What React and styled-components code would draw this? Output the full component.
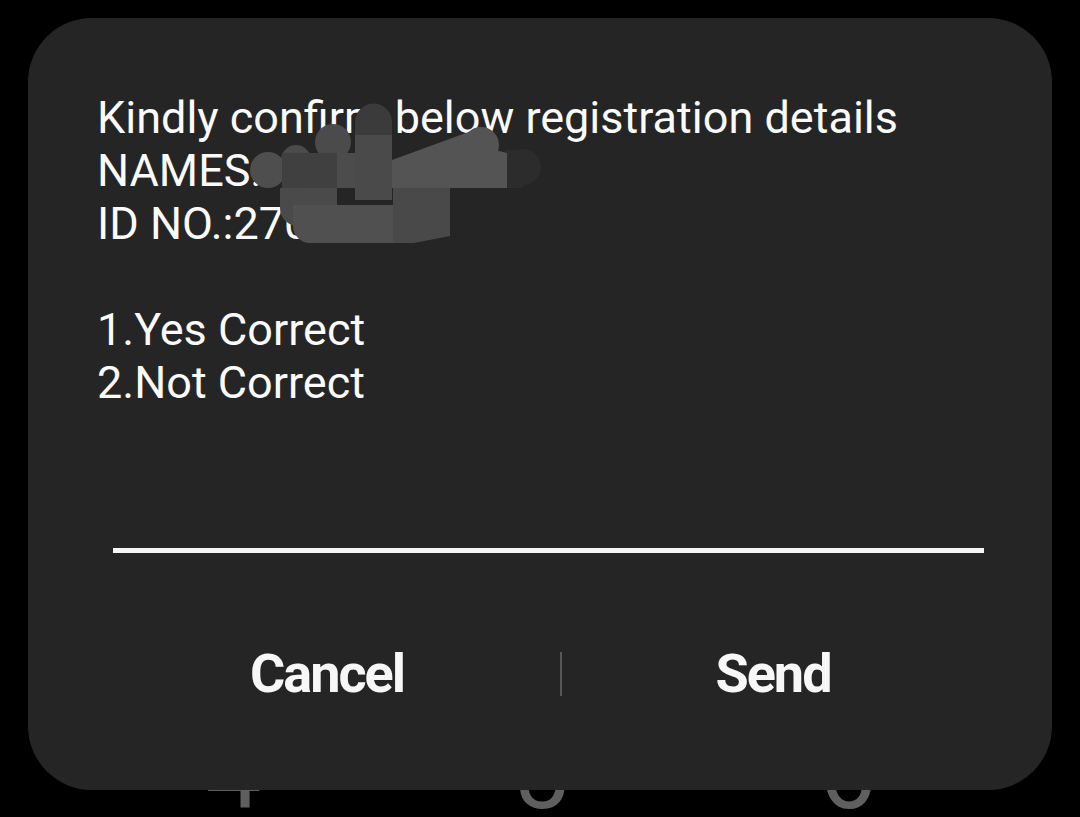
import React from "react";
import styled, { createGlobalStyle } from "styled-components";

const GlobalStyle = createGlobalStyle`
  html, body {
    margin: 0;
    padding: 0;
    background: #000;
  }
  * {
    box-sizing: border-box;
  }
`;

const Screen = styled.div`
  position: relative;
  width: 1080px;
  height: 817px;
  padding: 18px 28px 27px;
  background: #000;
  overflow: hidden;
  font-family: Roboto, "Noto Sans", sans-serif;
`;

// dial pad sitting behind the dialog, only the bottom of the digits shows
const Keypad = styled.div`
  position: absolute;
  left: 80px;
  top: 724px;
  display: grid;
  grid-template-columns: repeat(3, 307px);
  z-index: 0;
`;

const Key = styled.span`
  text-align: center;
  color: #5f5f5f;
  font-size: 100px;
  line-height: 1;
`;

const Dialog = styled.div`
  position: relative;
  z-index: 1;
  height: 772px;
  display: flex;
  flex-direction: column;
  background: #252525;
  border-radius: 64px;
`;

const Message = styled.div`
  flex-shrink: 0;
  padding: 73px 40px 0 69px;
  color: #fafafa;
  font-size: 45px;
  line-height: 53px;
  white-space: pre-line;
`;

const InputLine = styled.div`
  flex-shrink: 0;
  height: 144px;
  margin: 0 68px 0 85px;
  border-bottom: 5px solid #f6f6f6;
`;

const ButtonRow = styled.div`
  flex: 1;
  min-height: 0;
  display: grid;
  grid-template-columns: 466px 2px 1fr;
  align-items: center;
  padding: 4px 68px 0 66px;
`;

const ActionButton = styled.button`
  border: 0;
  background: transparent;
  color: #f7f7f7;
  font-family: Roboto, sans-serif;
  font-weight: 700;
  font-size: 54px;
  letter-spacing: -2px;
  padding: 0;
  cursor: pointer;
`;

const Divider = styled.span`
  width: 2px;
  height: 44px;
  background: #575757;
`;

const Censor = styled.svg`
  position: absolute;
  left: 0;
  top: 0;
  z-index: 2;
  pointer-events: none;
`;

const message = `Kindly confirm below registration details
NAMES:
ID NO.:270

1.Yes Correct
2.Not Correct`;

const App = () => {
  return (
    <>
      <GlobalStyle />
      <Screen>
        <Keypad>
          <Key>4</Key>
          <Key>5</Key>
          <Key>6</Key>
        </Keypad>
        <Dialog>
          <Message>{message}</Message>
          <InputLine />
          <ButtonRow>
            <ActionButton>Cancel</ActionButton>
            <Divider />
            <ActionButton>Send</ActionButton>
          </ButtonRow>
        </Dialog>
        <Censor width="1080" height="817" viewBox="0 0 1080 817">
          <circle cx="523" cy="167" r="18" fill="#2c2c2c" />
          <rect x="505" y="150" width="18" height="38" fill="#2c2c2c" />
          <path d="M392 160 L474 130 L495 150 L507 153 V188 H392 Z" fill="#545454" />
          <circle cx="481" cy="145" r="18" fill="#545454" />
          <path d="M355 140 V122 a18.5 18.5 0 0 1 37 0 V140 Z" fill="#3b3b3b" />
          <rect x="355" y="135" width="37" height="65" fill="#4a4a4a" />
          <circle cx="333" cy="142" r="18" fill="#4b4b4b" />
          <circle cx="296" cy="160" r="15" fill="#4b4b4b" />
          <circle cx="268" cy="170" r="18" fill="#4e4e4e" />
          <rect x="282" y="153" width="55" height="35" fill="#404040" />
          <rect x="337" y="153" width="18" height="35" fill="#4c4c4c" />
          <rect x="280" y="188" width="57" height="20" fill="#4a4a4a" />
          <circle cx="298" cy="208" r="18" fill="#4a4a4a" />
          <path d="M293 205 H393 V243 H310 a17 17 0 0 1 -17 -17 Z" fill="#505050" />
          <path d="M393 188 H450 V236 L414 243 H393 Z" fill="#494949" />
        </Censor>
      </Screen>
    </>
  );
};

export default App;
